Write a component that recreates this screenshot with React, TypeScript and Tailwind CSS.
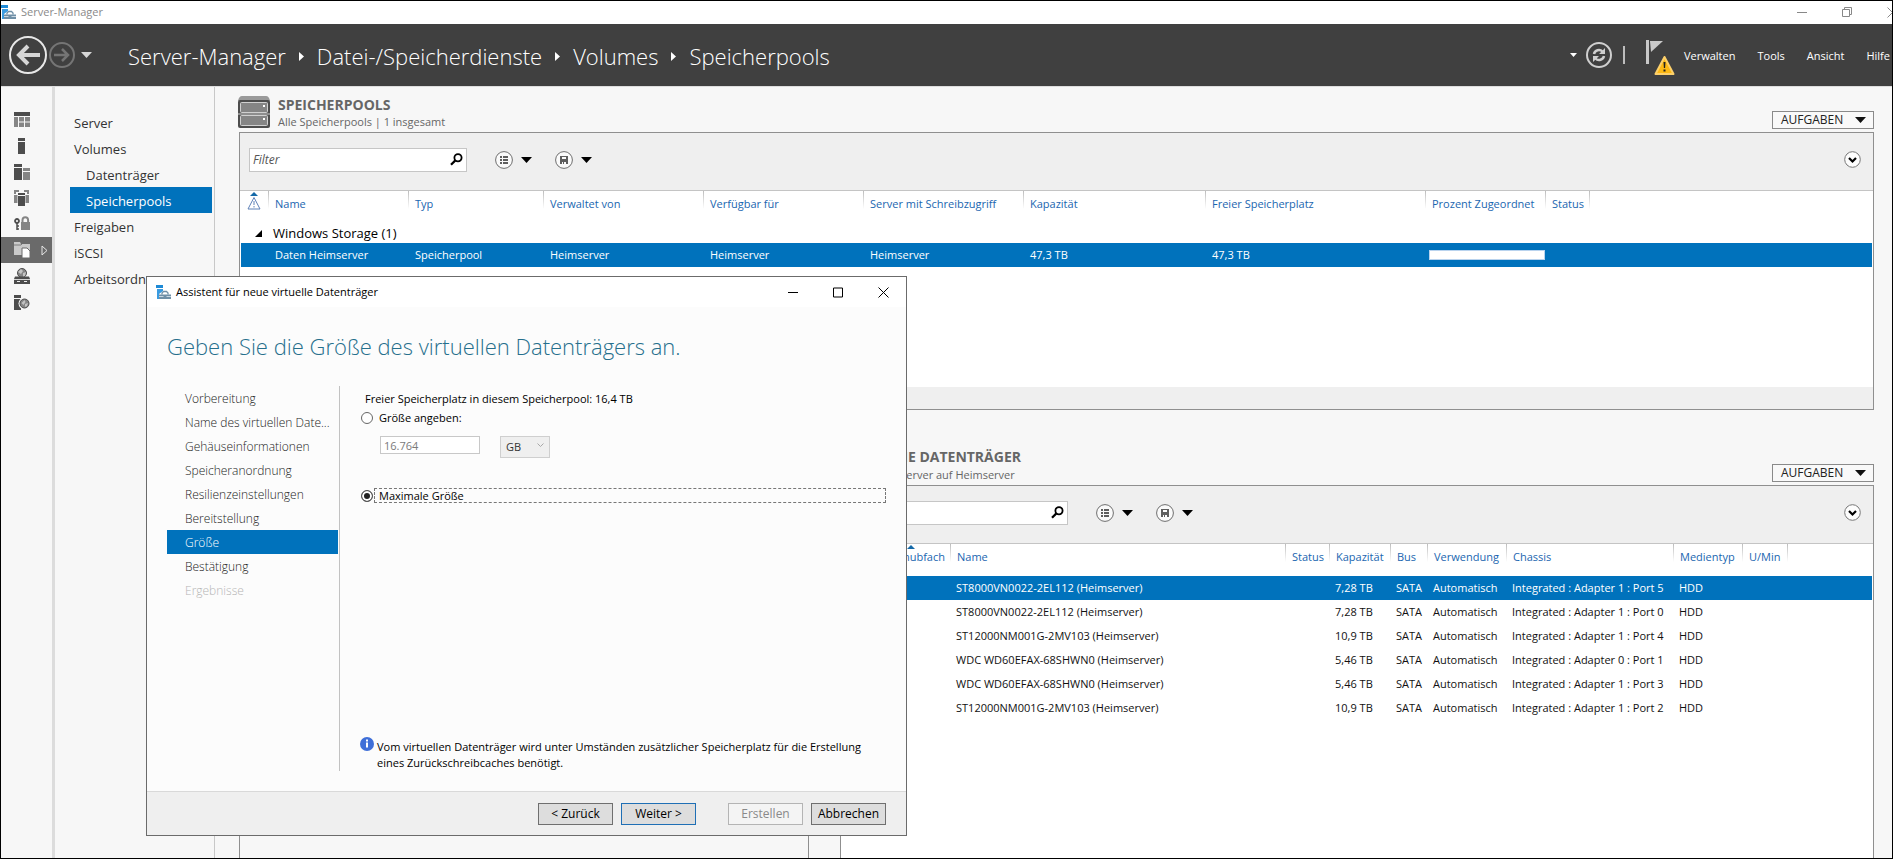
import React, { useState } from 'react';

type Column = { label: string; width: string };

const railItems = ['dashboard', 'local', 'all', 'ad', 'access', 'files', 'iis', 'remote'];

const sidebarItems = [
    { label: 'Server', nested: false },
    { label: 'Volumes', nested: false },
    { label: 'Datenträger', nested: true },
    { label: 'Speicherpools', nested: true },
    { label: 'Freigaben', nested: false },
    { label: 'iSCSI', nested: false },
    { label: 'Arbeitsordner', nested: false },
];

const poolColumns: Column[] = [
    { label: 'Name', width: 'w-[140px]' },
    { label: 'Typ', width: 'w-[135px]' },
    { label: 'Verwaltet von', width: 'w-[160px]' },
    { label: 'Verfügbar für', width: 'w-[160px]' },
    { label: 'Server mit Schreibzugriff', width: 'w-[160px]' },
    { label: 'Kapazität', width: 'w-[182px]' },
    { label: 'Freier Speicherplatz', width: 'w-[220px]' },
    { label: 'Prozent Zugeordnet', width: 'w-[120px]' },
    { label: 'Status', width: 'w-[44px]' },
];

const diskColumns: Column[] = [
    { label: 'Name', width: 'w-[335px]' },
    { label: 'Status', width: 'w-[44px]' },
    { label: 'Kapazität', width: 'w-[61px]' },
    { label: 'Bus', width: 'w-[37px]' },
    { label: 'Verwendung', width: 'w-[79px]' },
    { label: 'Chassis', width: 'w-[167px]' },
    { label: 'Medientyp', width: 'w-[69px]' },
    { label: 'U/Min', width: 'w-[45px]' },
];

const disks = [
    { name: 'ST8000VN0022-2EL112 (Heimserver)', size: '7,28 TB', chassis: 'Integrated : Adapter 1 : Port 5' },
    { name: 'ST8000VN0022-2EL112 (Heimserver)', size: '7,28 TB', chassis: 'Integrated : Adapter 1 : Port 0' },
    { name: 'ST12000NM001G-2MV103 (Heimserver)', size: '10,9 TB', chassis: 'Integrated : Adapter 1 : Port 4' },
    { name: 'WDC WD60EFAX-68SHWN0 (Heimserver)', size: '5,46 TB', chassis: 'Integrated : Adapter 0 : Port 1' },
    { name: 'WDC WD60EFAX-68SHWN0 (Heimserver)', size: '5,46 TB', chassis: 'Integrated : Adapter 1 : Port 3' },
    { name: 'ST12000NM001G-2MV103 (Heimserver)', size: '10,9 TB', chassis: 'Integrated : Adapter 1 : Port 2' },
];

const wizardSteps = [
    'Vorbereitung',
    'Name des virtuellen Date...',
    'Gehäuseinformationen',
    'Speicheranordnung',
    'Resilienzeinstellungen',
    'Bereitstellung',
    'Größe',
    'Bestätigung',
    'Ergebnisse',
];

function AppIcon() {
    return (
        <svg width="15" height="15" viewBox="0 0 15 15" className="shrink-0">
            <path d="M0 0h7v3H0z" fill="#1e8ad6" />
            <path d="M1 4h6v2L3 9v5H1z" fill="#3a9be0" />
            <path d="M3 9.500h12V14H3z" fill="#6f8fa6" />
            <path d="M6 9.500V8l1.500-1.500h3L12 8v1.500" fill="none" stroke="#6f8fa6" strokeWidth="1.300" />
            <path d="M3 11.500h4.500m3 0H15" fill="none" stroke="#dfe9f0" strokeWidth=".8" />
        </svg>
    );
}

function Caret({ className = 'text-black' }: { className?: string }) {
    return (
        <svg width="11" height="6" viewBox="0 0 11 6" className={className}>
            <path d="M0 0h11L5.500 6z" fill="currentColor" />
        </svg>
    );
}

function CrumbArrow() {
    return (
        <svg width="5" height="9" viewBox="0 0 5 9" className="mx-[13px] shrink-0">
            <path d="M0 0l5 4.500L0 9z" fill="#fff" />
        </svg>
    );
}

function RailIcon({ name }: { name: string }) {
    const dark = '#4d4d4d';
    const mid = '#858585';
    return (
        <svg width="16" height="16" viewBox="0 0 16 16">
            {name === 'dashboard' && (
                <>
                    <path d="M0 0h16v4H0z" fill={dark} />
                    <path d="M0 5h4v10H0zM5 5h5v4.500H5zM11 5h5v4.500h-5zM5 10.500h5V15H5zM11 10.500h5V15h-5z" fill={mid} />
                </>
            )}
            {name === 'local' && <path d="M4 0h7v3H4zM4 4h7v12H4z" fill={dark} />}
            {name === 'all' && (
                <>
                    <path d="M0 0h8v3H0zM0 4h8v12H0z" fill={dark} />
                    <path d="M9 4h7v3H9zM9 8h7v8H9z" fill={mid} />
                </>
            )}
            {name === 'ad' && (
                <>
                    <path d="M0 0h5v2H2v2H0zM10 0h5v4h-2V2h-3zM0 5h4v8H0zM11 5h4v8h-4z" fill={mid} />
                    <path d="M3.500 2h8v14h-8z" fill="#f7f7f7" />
                    <path d="M4 3h7v2H4zM4 6h7v10H4z" fill={dark} />
                </>
            )}
            {name === 'access' && (
                <>
                    <path d="M7 6h9v8H7z" fill={mid} />
                    <path d="M8.500 7V4a2.800 2.800 0 0 1 5.600 0v3" fill="none" stroke={mid} strokeWidth="2" />
                    <circle cx="3" cy="5" r="2" fill="none" stroke={dark} strokeWidth="1.800" />
                    <path d="M3 7v7M3 10h2M3 13h2" stroke={dark} strokeWidth="1.500" />
                </>
            )}
            {name === 'files' && (
                <>
                    <path d="M0 0h6l1 2h9v11H0z" fill="#c9c9c9" />
                    <path d="M0 3h7l1-1" stroke="#6a6a6a" fill="none" strokeWidth=".8" />
                    <path d="M8 6h5l3 3v7H8z" fill="#fff" stroke="#6a6a6a" />
                </>
            )}
            {name === 'iis' && (
                <>
                    <circle cx="8" cy="5" r="4.500" fill={mid} stroke={dark} />
                    <path d="M4 4l3-3 2 2-2 3zM9 5l3-1-1 4-2 1z" fill="#c4c4c4" />
                    <path d="M1 8.500h14l1 2.500v5H0v-5z" fill={dark} />
                    <path d="M0 11.500h16" stroke="#f7f7f7" strokeWidth=".8" />
                    <path d="M3 13.500h3M10 13.500h3" stroke="#eee" />
                </>
            )}
            {name === 'remote' && (
                <>
                    <path d="M0 1h7v3H0zM0 5h7v11H0z" fill={dark} />
                    <circle cx="10.500" cy="9.500" r="6" fill="#f7f7f7" />
                    <circle cx="10.500" cy="9.500" r="4.500" fill={mid} stroke={dark} />
                    <path d="M7.500 9l3-3 1 2-2 3zM11 10l3-1-1 3-2 1z" fill="#c4c4c4" />
                </>
            )}
        </svg>
    );
}

function PoolIcon() {
    return (
        <svg width="32" height="32" viewBox="0 0 32 32" className="shrink-0">
            <path d="M4 0h24q3 0 4 5H0q1-5 4-5z" fill="#9a9a9a" />
            <rect x="0" y="4" width="32" height="28" rx="2" fill="#4d4d4d" />
            <rect x="2.500" y="6.500" width="27" height="10" rx="1" fill="#858585" stroke="#d0d0d0" />
            <rect x="2.500" y="19.500" width="27" height="10" rx="1" fill="#858585" stroke="#d0d0d0" />
            <path d="M0 18h32" stroke="#d0d0d0" />
            <path d="M25 9h2v2h-2zM25 22h2v2h-2z" fill="#fff" />
        </svg>
    );
}

function TasksButton() {
    return (
        <button className="flex h-[18px] w-[102px] items-center justify-between border border-[#8a8a8a] bg-[#f9f9f9] pl-2 pr-[7px] text-[12px] leading-4 text-[#222]">
            AUFGABEN
            <Caret className="text-[#111]" />
        </button>
    );
}

function Toolbar({ id }: { id: string }) {
    return (
        <div className="flex h-[58px] items-center border-b border-[#c4c4c4] bg-[#efefef] pb-1 pl-[9px] pr-3">
            <div className="flex h-6 w-[218px] items-center border border-[#c6c6c6] bg-white pl-[3px] pr-[3px]">
                <input id={id} aria-label="Filter" placeholder="Filter" className="min-w-0 flex-1 text-[12px] italic outline-none placeholder:text-[#555]" />
                <button aria-label="Suchen">
                    <svg width="13" height="13" viewBox="0 0 13 13">
                        <circle cx="8" cy="4.800" r="3.600" fill="none" stroke="#000" strokeWidth="1.800" />
                        <path d="M5.400 7.400L1 11.800" stroke="#000" strokeWidth="2.200" />
                    </svg>
                </button>
            </div>
            <button aria-label="Gespeicherte Filter" className="ml-7 flex items-center gap-2">
                <svg width="18" height="18" viewBox="0 0 18 18">
                    <circle cx="9" cy="9" r="8.400" fill="#fafafa" stroke="#6e6e6e" />
                    <path d="M5 5h2v2H5zM8 5h5v2H8zM5 8h2v2H5zM8 8h5v2H8zM5 11h2v2H5zM8 11h5v2H8z" fill="#5e5e5e" />
                </svg>
                <Caret />
            </button>
            <button aria-label="Filter speichern" className="ml-[23px] flex items-center gap-2">
                <svg width="18" height="18" viewBox="0 0 18 18">
                    <circle cx="9" cy="9" r="8.400" fill="#fafafa" stroke="#6e6e6e" />
                    <path d="M5 5h8v8H5z" fill="#5e5e5e" />
                    <path d="M7 6h4v2H7zM7 11h1v2H7zM9 11h2v2H9z" fill="#fafafa" />
                </svg>
                <Caret />
            </button>
            <button aria-label="Erweitern" className="ml-auto">
                <svg width="17" height="17" viewBox="0 0 17 17">
                    <circle cx="8.500" cy="8.500" r="7.800" fill="#fdfdfd" stroke="#777" />
                    <path d="M5 7l3.500 3.500L12 7" fill="none" stroke="#000" strokeWidth="2.200" />
                </svg>
            </button>
        </div>
    );
}

function HeaderCells({ columns }: { columns: Column[] }) {
    return (
        <>
            {columns.map((column) => (
                <th
                    key={column.label}
                    className={`${column.width} h-8 whitespace-nowrap bg-[linear-gradient(#bdbdbd,#ffffff)] bg-[length:1px_18px] bg-no-repeat pl-[7px] text-left align-top font-normal leading-[25px] text-[#1a66b0]`}
                >
                    {column.label}
                </th>
            ))}
            <th className="h-8 bg-[linear-gradient(#bdbdbd,#ffffff)] bg-[length:1px_18px] bg-no-repeat" />
        </>
    );
}

function PoolTable() {
    return (
        <table className="w-full table-fixed border-collapse text-[11px] leading-6">
            <thead>
                <tr>
                    <th className="h-8 w-[27px] pl-[6px] align-top">
                        <svg width="14" height="19" viewBox="0 0 14 19">
                            <path d="M3 5l4-4 4 4z" fill="#1469a8" />
                            <path d="M7 6.500L13 18H1z" fill="none" stroke="#5f82b8" />
                            <path d="M7 10v4M7 15v1.500" stroke="#5f82b8" />
                        </svg>
                    </th>
                    <HeaderCells columns={poolColumns} />
                </tr>
            </thead>
            <tbody>
                <tr>
                    <td colSpan={11} className="h-5 pl-[14px] text-[13px] leading-5">
                        <button className="flex items-center">
                            <svg width="8" height="7" viewBox="0 0 8 7" className="mr-[10px]">
                                <path d="M7 0v7H0z" fill="#000" />
                            </svg>
                            Windows Storage (1)
                        </button>
                    </td>
                </tr>
                <tr className="h-6 bg-[#0072bc] text-white">
                    <td />
                    <td className="whitespace-nowrap pl-[7px]">Daten Heimserver</td>
                    <td className="pl-[7px]">Speicherpool</td>
                    <td className="pl-[7px]">Heimserver</td>
                    <td className="pl-[7px]">Heimserver</td>
                    <td className="pl-[7px]">Heimserver</td>
                    <td className="pl-[7px]">47,3 TB</td>
                    <td className="pl-[7px]">47,3 TB</td>
                    <td className="pl-1">
                        <div className="h-[10px] border border-[#b9d3ee] bg-white" />
                    </td>
                    <td />
                    <td />
                </tr>
            </tbody>
        </table>
    );
}

function DiskTable() {
    return (
        <table className="w-full table-fixed border-collapse text-[11px] leading-6">
            <thead>
                <tr>
                    <th className="h-8 w-[109px] whitespace-nowrap pr-[5px] text-right align-top font-normal leading-[25px] text-[#1a66b0]">
                        <div className="relative">
                            <svg width="8" height="4" viewBox="0 0 8 4" className="absolute right-[30px] top-px">
                                <path d="M0 4l4-4 4 4z" fill="#1469a8" />
                            </svg>
                            Einschubfach
                        </div>
                    </th>
                    <HeaderCells columns={diskColumns} />
                </tr>
            </thead>
            <tbody>
                {disks.map((disk, index) => (
                    <tr key={index} className={`h-6 whitespace-nowrap ${index === 0 ? 'bg-[#0072bc] text-white' : 'text-[#111]'}`}>
                        <td />
                        <td className="pl-[6px]">{disk.name}</td>
                        <td />
                        <td className="pl-[6px]">{disk.size}</td>
                        <td className="pl-[6px]">SATA</td>
                        <td className="pl-[6px]">Automatisch</td>
                        <td className="pl-[6px]">{disk.chassis}</td>
                        <td className="pl-[6px]">HDD</td>
                        <td />
                        <td />
                    </tr>
                ))}
            </tbody>
        </table>
    );
}

function Wizard() {
    const [mode, setMode] = useState('max');

    return (
        <div role="dialog" aria-label="Assistent für neue virtuelle Datenträger" className="absolute left-[145px] top-[275px] flex h-[560px] w-[761px] flex-col border border-[#6b6b6b] bg-[#fcfcfc] text-[11px] text-black">
            <div className="flex h-[30px] items-center bg-white pl-[9px] pr-[17px]">
                <AppIcon />
                <span className="ml-[5px] flex-1">Assistent für neue virtuelle Datenträger</span>
                <div className="flex items-center gap-[35px]">
                    <button aria-label="Minimieren">
                        <svg width="10" height="11" viewBox="0 0 10 11"><path d="M0 5.500h10" stroke="#000" /></svg>
                    </button>
                    <button aria-label="Maximieren">
                        <svg width="10" height="11" viewBox="0 0 10 11"><path d="M.5 1h9v9h-9z" fill="none" stroke="#000" /></svg>
                    </button>
                    <button aria-label="Schließen">
                        <svg width="11" height="11" viewBox="0 0 11 11"><path d="M.5.5l10 10M10.500.5l-10 10" stroke="#000" /></svg>
                    </button>
                </div>
            </div>

            <h1 className="ml-5 mt-[23px] text-[22px] font-light leading-8 text-[#266f8c]">Geben Sie die Größe des virtuellen Datenträgers an.</h1>

            <div className="mt-6 flex min-h-0 flex-1 px-5 pb-5">
                <ol className="w-[171px]">
                    {wizardSteps.map((step) => (
                        <li
                            key={step}
                            className={`h-6 whitespace-nowrap pl-[18px] text-[12px] font-light leading-[25px] ${step === 'Größe' ? 'bg-[#0072bc] text-white' : step === 'Ergebnisse' ? 'text-[#b5b5b5]' : 'text-[#222]'}`}
                        >
                            {step}
                        </li>
                    ))}
                </ol>
                <div className="ml-px flex flex-1 flex-col border-l border-[#c2c2c2] pl-5">
                    <p className="pl-[5px] pt-1 leading-[18px]">Freier Speicherplatz in diesem Speicherpool: 16,4 TB</p>
                    <div className="flex items-center">
                        <input
                            type="radio"
                            id="size-custom"
                            name="size"
                            checked={mode === 'custom'}
                            onChange={() => setMode('custom')}
                            className="ml-px size-3 appearance-none rounded-full border border-[#666] bg-white checked:bg-[#222] checked:shadow-[inset_0_0_0_2px_white]"
                        />
                        <label htmlFor="size-custom" className="pl-[6px] leading-5">Größe angeben:</label>
                    </div>
                    <div className="flex items-start gap-5 pl-5 pt-2">
                        <input
                            aria-label="Größe"
                            disabled
                            defaultValue="16.764"
                            className="h-[18px] w-[100px] border border-[#c8c8c8] bg-white px-[3px] text-[11px] text-[#7a7a7a]"
                        />
                        <div className="relative">
                            <select aria-label="Einheit" disabled className="h-[22px] w-[50px] appearance-none border border-[#cfcfcf] bg-[#efefef] pl-[5px] text-[11px] leading-5 text-[#333] opacity-100">
                                <option>GB</option>
                            </select>
                            <svg width="7" height="5" viewBox="0 0 7 5" className="absolute right-[6px] top-[7px]">
                                <path d="M.5.5l3 3 3-3" fill="none" stroke="#a8a8a8" />
                            </svg>
                        </div>
                    </div>
                    <div className="mt-[30px] flex items-center">
                        <input
                            type="radio"
                            id="size-max"
                            name="size"
                            checked={mode === 'max'}
                            onChange={() => setMode('max')}
                            className="ml-px size-3 appearance-none rounded-full border border-[#555] bg-white checked:bg-[#222] checked:shadow-[inset_0_0_0_2px_white]"
                        />
                        <label htmlFor="size-max" className="ml-px flex-1 border border-dashed border-[#777] pl-1 leading-[13px]">Maximale Größe</label>
                    </div>
                    <div className="mt-auto flex gap-[3px] leading-4">
                        <svg width="14" height="14" viewBox="0 0 14 14" className="mt-px shrink-0">
                            <circle cx="7" cy="7" r="7" fill="#3f6fd8" />
                            <path d="M6 2.500h2v2H6zM6 5.500h2v5H6z" fill="#fff" />
                        </svg>
                        <p className="pt-[3px]">
                            Vom virtuellen Datenträger wird unter Umständen zusätzlicher Speicherplatz für die Erstellung
                            <br />
                            eines Zurückschreibcaches benötigt.
                        </p>
                    </div>
                </div>
            </div>

            <div className="flex h-11 items-center justify-end gap-2 border-t border-[#d9d9d9] bg-[#efefef] pr-5 text-[12px]">
                <button className="h-[22px] w-[75px] border border-[#6f6f6f] bg-[#dddddd]">&lt; Zurück</button>
                <button className="h-[22px] w-[75px] border border-[#1f6fb5] bg-[#dddddd]">Weiter &gt;</button>
                <button disabled className="ml-6 h-[22px] w-[75px] border border-[#b4b4b4] bg-[#f4f4f4] text-[#8a8a8a]">Erstellen</button>
                <button className="h-[22px] w-[75px] border border-[#6f6f6f] bg-[#dddddd]">Abbrechen</button>
            </div>
        </div>
    );
}

export default function App() {
    return (
        <div className="relative flex h-screen flex-col overflow-hidden border border-black bg-[#f7f7f7] font-['Open_Sans',sans-serif] text-[11px] text-black">
            <div className="flex h-[23px] shrink-0 items-center bg-white text-[#8a8a8a]">
                <AppIcon />
                <span className="ml-[5px] flex-1">Server-Manager</span>
                <div className="flex items-center gap-[35px]">
                    <button aria-label="Minimieren">
                        <svg width="10" height="11" viewBox="0 0 10 11"><path d="M0 5.500h10" stroke="#888" /></svg>
                    </button>
                    <button aria-label="Wiederherstellen">
                        <svg width="10" height="11" viewBox="0 0 10 11"><path d="M.5 2.500h7v7h-7zM2.500 2V.5h7v7H8" fill="none" stroke="#888" /></svg>
                    </button>
                    <button aria-label="Schließen" className="w-[5px] overflow-hidden">
                        <svg width="11" height="11" viewBox="0 0 11 11"><path d="M.5.5l10 10M10.500.5l-10 10" stroke="#888" /></svg>
                    </button>
                </div>
            </div>

            <header className="flex h-[62px] shrink-0 items-center bg-[#404040] text-white">
                <button aria-label="Zurück" className="ml-2">
                    <svg width="38" height="38" viewBox="0 0 38 38">
                        <circle cx="19" cy="19" r="18" fill="none" stroke="#e8e8e8" strokeWidth="2" />
                        <path d="M31 19H10M19 10l-9 9 9 9" fill="none" stroke="#d6d6d6" strokeWidth="4" />
                    </svg>
                </button>
                <button aria-label="Vorwärts" className="ml-[2px]">
                    <svg width="26" height="26" viewBox="0 0 26 26">
                        <circle cx="13" cy="13" r="12" fill="none" stroke="#757575" strokeWidth="2" />
                        <path d="M5 13h14M13 7l6 6-6 6" fill="none" stroke="#757575" strokeWidth="2.500" />
                    </svg>
                </button>
                <button aria-label="Verlauf" className="ml-[6px]">
                    <Caret className="text-[#d6d6d6]" />
                </button>
                <nav className="ml-[36px] flex flex-1 items-center pt-[2px] text-[22px] font-light leading-8">
                    <a href="#server-manager">Server-Manager</a>
                    <CrumbArrow />
                    <a href="#dienste">Datei-/Speicherdienste</a>
                    <CrumbArrow />
                    <a href="#volumes">Volumes</a>
                    <CrumbArrow />
                    <a href="#speicherpools">Speicherpools</a>
                </nav>
                <button aria-label="Aktualisierungsoptionen">
                    <svg width="7" height="4" viewBox="0 0 7 4"><path d="M0 0h7L3.500 4z" fill="#fff" /></svg>
                </button>
                <button aria-label="Aktualisieren" className="ml-[9px]">
                    <svg width="26" height="26" viewBox="0 0 26 26">
                        <circle cx="13" cy="13" r="12" fill="none" stroke="#cfcfcf" strokeWidth="2" />
                        <path d="M8 12a5 5 0 0 1 8.500-2.500M18 14a5 5 0 0 1-8.500 2.500" fill="none" stroke="#cfcfcf" strokeWidth="2.500" />
                        <path d="M19 6v6h-6zM7 20v-6h6z" fill="#cfcfcf" />
                    </svg>
                </button>
                <div className="ml-[11px] h-[18px] w-[2px] bg-[#bdbdbd]" />
                <button aria-label="Benachrichtigungen" className="ml-5 pt-1">
                    <svg width="30" height="38" viewBox="0 0 30 38">
                        <path d="M1 2h3v24H1z" fill="#c9c9c9" />
                        <path d="M5 3h13L6 14z" fill="#c9c9c9" />
                        <path d="M19.500 19l9 17H10.500z" fill="#fdb913" stroke="#fdd06a" strokeWidth="2" strokeLinejoin="round" />
                        <path d="M18.500 24h2l-.4 6h-1.200zM18.500 31.500h2v2h-2z" fill="#222" />
                    </svg>
                </button>
                <nav className="ml-[9px] flex items-center gap-[22px] pr-[2px] pt-[2px]">
                    <a href="#verwalten">Verwalten</a>
                    <a href="#tools">Tools</a>
                    <a href="#ansicht">Ansicht</a>
                    <a href="#hilfe">Hilfe</a>
                </nav>
            </header>

            <div className="flex min-h-0 flex-1 border-t border-[#dedede]">
                <nav className="w-[54px] shrink-0 border-r-[3px] border-[#dcdcdc] pt-5">
                    {railItems.map((item) => (
                        <button
                            key={item}
                            aria-label={item}
                            className={`flex h-[26px] w-full items-center pl-[13px] ${item === 'files' ? 'bg-[#6a6a6a]' : ''}`}
                        >
                            <RailIcon name={item} />
                            {item === 'files' && (
                                <svg width="7" height="11" viewBox="0 0 7 11" className="ml-[11px]">
                                    <path d="M1 1l5 4.500-5 4.500z" fill="none" stroke="#e6e6e6" />
                                </svg>
                            )}
                        </button>
                    ))}
                </nav>

                <nav className="w-[160px] shrink-0 border-r border-[#c8c8c8] pl-[15px] pr-[2px] pt-[22px] text-[13px]">
                    {sidebarItems.map((item) => (
                        <a
                            key={item.label}
                            href="#"
                            className={`block h-[26px] leading-7 ${item.nested ? 'pl-4' : 'pl-1'} ${item.label === 'Speicherpools' ? 'bg-[#0072bc] text-white' : 'text-[#333]'}`}
                        >
                            {item.label}
                        </a>
                    ))}
                </nav>

                <main className="flex min-w-0 flex-1 flex-col pl-6 pr-[18px]">
                    <section className="shrink-0 pt-[9px]">
                        <div className="flex h-9 items-start">
                            <div className="-ml-px flex flex-1 gap-2">
                                <PoolIcon />
                                <div className="text-[#666]">
                                    <h2 className="text-[14px] font-bold leading-[17px]">SPEICHERPOOLS</h2>
                                    <p className="leading-[18px]">Alle Speicherpools | 1 insgesamt</p>
                                </div>
                            </div>
                            <div className="pt-[15px]">
                                <TasksButton />
                            </div>
                        </div>
                        <div className="border border-[#8f8f8f] bg-[#efefef]">
                            <Toolbar id="pool-filter" />
                            <div className="min-h-[196px] bg-white px-px">
                                <PoolTable />
                            </div>
                            <div className="h-[22px]" />
                        </div>
                    </section>

                    <div className="mt-[38px] flex min-h-0 flex-1 gap-[31px]">
                        <section className="mt-[37px] w-[570px] shrink-0 border border-b-0 border-[#8f8f8f]" />
                        <section className="flex min-w-0 flex-1 flex-col">
                            <div className="flex h-[37px] items-start">
                                <div className="flex-1 text-[#666]">
                                    <h2 className="text-[14px] font-bold leading-[18px]">PHYSISCHE DATENTRÄGER</h2>
                                    <p className="leading-[18px]">Daten Heimserver auf Heimserver</p>
                                </div>
                                <div className="pt-4">
                                    <TasksButton />
                                </div>
                            </div>
                            <div className="min-h-0 flex-1 border border-b-0 border-[#8f8f8f] bg-white">
                                <Toolbar id="disk-filter" />
                                <div className="pr-px">
                                    <DiskTable />
                                </div>
                            </div>
                        </section>
                    </div>
                </main>
            </div>

            <Wizard />
        </div>
    );
}
